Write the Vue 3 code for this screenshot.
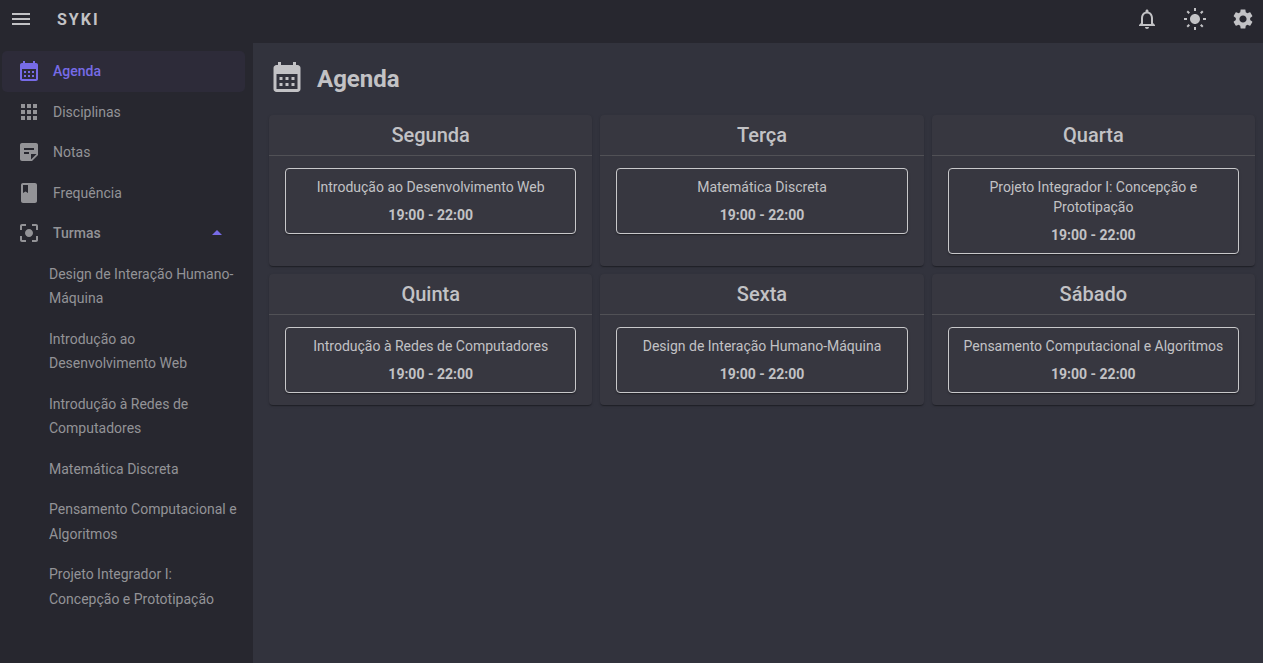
<script setup>
import { ref } from 'vue'

const icons = {
  menu: 'M3 18h18v-2H3v2zm0-5h18v-2H3v2zm0-7v2h18V6H3z',
  calendar: 'M19 4h-1V2h-2v2H8V2H6v2H5c-1.11 0-1.99.9-1.99 2L3 20c0 1.1.89 2 2 2h14c1.1 0 2-.9 2-2V6c0-1.1-.9-2-2-2zm0 16H5V10h14v10zM9 14H7v-2h2v2zm4 0h-2v-2h2v2zm4 0h-2v-2h2v2zm-8 4H7v-2h2v2zm4 0h-2v-2h2v2zm4 0h-2v-2h2v2z',
  apps: 'M4 8h4V4H4v4zm6 12h4v-4h-4v4zm-6 0h4v-4H4v4zm0-6h4v-4H4v4zm6 0h4v-4h-4v4zm6-10v4h4V4h-4zm-6 4h4V4h-4v4zm6 6h4v-4h-4v4zm0 6h4v-4h-4v4z',
  note: 'M19 3H5c-1.1 0-2 .9-2 2v14c0 1.1.9 2 2 2h10l6-6V5c0-1.1-.9-2-2-2zm-7 11H7v-2h5v2zm5-4H7V8h10v2zm-3 9.5V14h5.5L14 19.5z',
  book: 'M18 2H6c-1.1 0-2 .9-2 2v16c0 1.1.9 2 2 2h12c1.1 0 2-.9 2-2V4c0-1.1-.9-2-2-2zM6 4h5v8l-2.5-1.5L6 12V4z',
  focus: 'M12 8c-2.21 0-4 1.79-4 4s1.79 4 4 4 4-1.79 4-4-1.79-4-4-4zm-7 7H3v4c0 1.1.9 2 2 2h4v-2H5v-4zM5 5h4V3H5c-1.1 0-2 .9-2 2v4h2V5zm14-2h-4v2h4v4h2V5c0-1.1-.9-2-2-2zm0 16h-4v2h4c1.1 0 2-.9 2-2v-4h-2v4z',
  caret: 'M7 14l5-5 5 5z',
  bell: 'M12 22c1.1 0 2-.9 2-2h-4c0 1.1.9 2 2 2zm6-6v-5c0-3.07-1.63-5.64-4.5-6.32V4c0-.83-.67-1.5-1.5-1.5s-1.5.67-1.5 1.5v.68C7.64 5.36 6 7.92 6 11v5l-2 2v1h16v-1l-2-2zm-2 1H8v-6c0-2.48 1.51-4.5 4-4.5s4 2.02 4 4.5v6z',
  sun: 'M12 7c-2.76 0-5 2.24-5 5s2.24 5 5 5 5-2.24 5-5-2.24-5-5-5zM1 11h3v2H1zM20 11h3v2h-3zM11 1h2v3h-2zM11 20h2v3h-2zM4.93 3.52L6.99 5.58 5.58 6.99 3.52 4.93zM18.42 17.01L20.48 19.07 19.07 20.48 17.01 18.42zM20.48 4.93L18.42 6.99 17.01 5.58 19.07 3.52zM6.99 18.42L4.93 20.48 3.52 19.07 5.58 17.01z',
  gear: 'M19.14 12.94c.04-.3.06-.61.06-.94 0-.32-.02-.64-.07-.94l2.03-1.58c.18-.14.23-.41.12-.61l-1.92-3.32c-.12-.22-.37-.29-.59-.22l-2.39.96c-.5-.38-1.03-.7-1.62-.94l-.36-2.54c-.04-.24-.24-.41-.48-.41h-3.84c-.24 0-.43.17-.47.41l-.36 2.54c-.59.24-1.13.57-1.62.94l-2.39-.96c-.22-.08-.47 0-.59.22L2.74 8.87c-.12.21-.08.47.12.61l2.03 1.58c-.05.3-.09.63-.09.94s.02.64.07.94l-2.03 1.58c-.18.14-.23.41-.12.61l1.92 3.32c.12.22.37.29.59.22l2.39-.96c.5.38 1.03.7 1.62.94l.36 2.54c.05.24.24.41.48.41h3.84c.24 0 .44-.17.47-.41l.36-2.54c.59-.24 1.13-.56 1.62-.94l2.39.96c.22.08.47 0 .59-.22l1.92-3.32c.12-.22.07-.47-.12-.61l-2.01-1.58zM12 15.6c-1.98 0-3.6-1.62-3.6-3.6s1.62-3.6 3.6-3.6 3.6 1.62 3.6 3.6-1.62 3.6-3.6 3.6z',
}

const links = [
  { label: 'Agenda', icon: 'calendar', active: true },
  { label: 'Disciplinas', icon: 'apps' },
  { label: 'Notas', icon: 'note' },
  { label: 'Frequência', icon: 'book' },
]

const classes = [
  'Design de Interação Humano-Máquina',
  'Introdução ao Desenvolvimento Web',
  'Introdução à Redes de Computadores',
  'Matemática Discreta',
  'Pensamento Computacional e Algoritmos',
  'Projeto Integrador I: Concepção e Prototipação',
]

const days = [
  { name: 'Segunda', subject: 'Introdução ao Desenvolvimento Web', time: '19:00 - 22:00' },
  { name: 'Terça', subject: 'Matemática Discreta', time: '19:00 - 22:00' },
  { name: 'Quarta', subject: 'Projeto Integrador I: Concepção e Prototipação', time: '19:00 - 22:00' },
  { name: 'Quinta', subject: 'Introdução à Redes de Computadores', time: '19:00 - 22:00' },
  { name: 'Sexta', subject: 'Design de Interação Humano-Máquina', time: '19:00 - 22:00' },
  { name: 'Sábado', subject: 'Pensamento Computacional e Algoritmos', time: '19:00 - 22:00' },
]

const drawerOpen = ref(true)
const groupOpen = ref(true)
</script>

<template>
  <div class="layout">
    <header class="appbar">
      <button class="icon-button" type="button" aria-label="Menu" @click="drawerOpen = !drawerOpen">
        <svg class="icon" viewBox="0 0 24 24"><path :d="icons.menu" /></svg>
      </button>
      <span class="brand">SYKI</span>
      <div class="actions">
        <button class="icon-button" type="button" aria-label="Notificações">
          <svg class="icon" viewBox="0 0 24 24"><path :d="icons.bell" /></svg>
        </button>
        <button class="icon-button" type="button" aria-label="Tema">
          <svg class="icon" viewBox="0 0 24 24"><path :d="icons.sun" /></svg>
        </button>
        <button class="icon-button" type="button" aria-label="Configurações">
          <svg class="icon" viewBox="0 0 24 24"><path :d="icons.gear" /></svg>
        </button>
      </div>
    </header>

    <div class="body">
      <nav v-if="drawerOpen" class="drawer">
        <a
          v-for="link in links"
          :key="link.label"
          href="#"
          class="nav-link"
          :class="{ active: link.active }"
        >
          <svg class="icon" viewBox="0 0 24 24"><path :d="icons[link.icon]" /></svg>
          <span>{{ link.label }}</span>
        </a>
        <button class="nav-link group" type="button" :aria-expanded="groupOpen" @click="groupOpen = !groupOpen">
          <svg class="icon" viewBox="0 0 24 24"><path :d="icons.focus" /></svg>
          <span class="group-label">Turmas</span>
          <svg class="icon caret" :class="{ closed: !groupOpen }" viewBox="0 0 24 24"><path :d="icons.caret" /></svg>
        </button>
        <div v-if="groupOpen" class="subnav">
          <a v-for="name in classes" :key="name" href="#" class="sub-link">{{ name }}</a>
        </div>
      </nav>

      <main class="content">
        <div class="page-title">
          <svg class="icon large" viewBox="0 0 24 24"><path :d="icons.calendar" /></svg>
          <h1>Agenda</h1>
        </div>
        <div class="days">
          <section v-for="day in days" :key="day.name" class="day">
            <h2>{{ day.name }}</h2>
            <div class="day-body">
              <article class="lesson">
                <p>{{ day.subject }}</p>
                <p class="time">{{ day.time }}</p>
              </article>
            </div>
          </section>
        </div>
      </main>
    </div>
  </div>
</template>

<style>
body {
  margin: 0;
  background: #32333d;
}
</style>

<style scoped>
* {
  box-sizing: border-box;
}
.layout {
  display: flex;
  flex-direction: column;
  min-height: 100vh;
  color: #c2c2c5;
  font-family: Roboto, 'Liberation Sans', sans-serif;
  font-size: 14px;
}
button {
  padding: 0;
  border: 0;
  background: none;
  color: inherit;
  font: inherit;
  cursor: pointer;
}
a {
  color: inherit;
  text-decoration: none;
}
.icon {
  display: block;
  flex: none;
  width: 24px;
  height: 24px;
  fill: currentColor;
}
.icon.large {
  width: 36px;
  height: 36px;
}
.appbar {
  display: flex;
  align-items: flex-end;
  padding: 7px 8px 12px 9px;
  background: #27272f;
}
.brand {
  margin-left: 24px;
  font-size: 16px;
  font-weight: 700;
  line-height: 22px;
  letter-spacing: 2px;
}
.actions {
  display: flex;
  gap: 24px;
  margin-left: auto;
}
.body {
  display: flex;
  flex: 1;
}
.drawer {
  flex: none;
  width: 253px;
  padding: 8px 8px 8px 2px;
  background: #27272f;
  color: #939397;
  line-height: 1.75;
}
.nav-link {
  display: flex;
  align-items: center;
  gap: 12px;
  width: 100%;
  padding: 8px 16px 8px 15px;
  border-radius: 5px;
}
.nav-link.active {
  background: #2d2b39;
  color: #776be7;
  font-weight: 500;
}
.group {
  line-height: inherit;
  text-align: left;
}
.group-label {
  flex: 1;
  font-weight: 500;
}
.caret {
  color: #776be7;
}
.caret.closed {
  transform: rotate(180deg);
}
.sub-link {
  display: block;
  padding: 8px 8px 8px 47px;
}
.content {
  flex: 1;
  min-width: 0;
  padding: 16px 8px 16px 16px;
  background: #32333d;
}
.page-title {
  display: flex;
  align-items: flex-end;
  gap: 12px;
  margin-bottom: 20px;
}
h1,
h2,
p {
  margin: 0;
}
h1 {
  font-size: 24px;
  font-weight: 700;
  line-height: 32px;
}
.days {
  display: grid;
  grid-template-columns: repeat(3, 1fr);
  gap: 8px;
}
.day {
  border-radius: 4px;
  background: #373740;
  box-shadow: 0 2px 1px -1px rgba(0, 0, 0, 0.2), 0 1px 1px rgba(0, 0, 0, 0.14), 0 1px 3px rgba(0, 0, 0, 0.12);
}
h2 {
  border-bottom: 1px solid #515156;
  font-size: 20px;
  font-weight: 500;
  line-height: 40px;
  text-align: center;
}
.day-body {
  padding: 12px 16px;
}
.lesson {
  display: grid;
  gap: 8px;
  padding: 8px;
  border: 1px solid #c8c8ca;
  border-radius: 4px;
  line-height: 20px;
  text-align: center;
  box-shadow: 0 2px 1px -1px rgba(0, 0, 0, 0.2), 0 1px 1px rgba(0, 0, 0, 0.14), 0 1px 3px rgba(0, 0, 0, 0.12);
}
.time {
  font-weight: 700;
}
</style>
